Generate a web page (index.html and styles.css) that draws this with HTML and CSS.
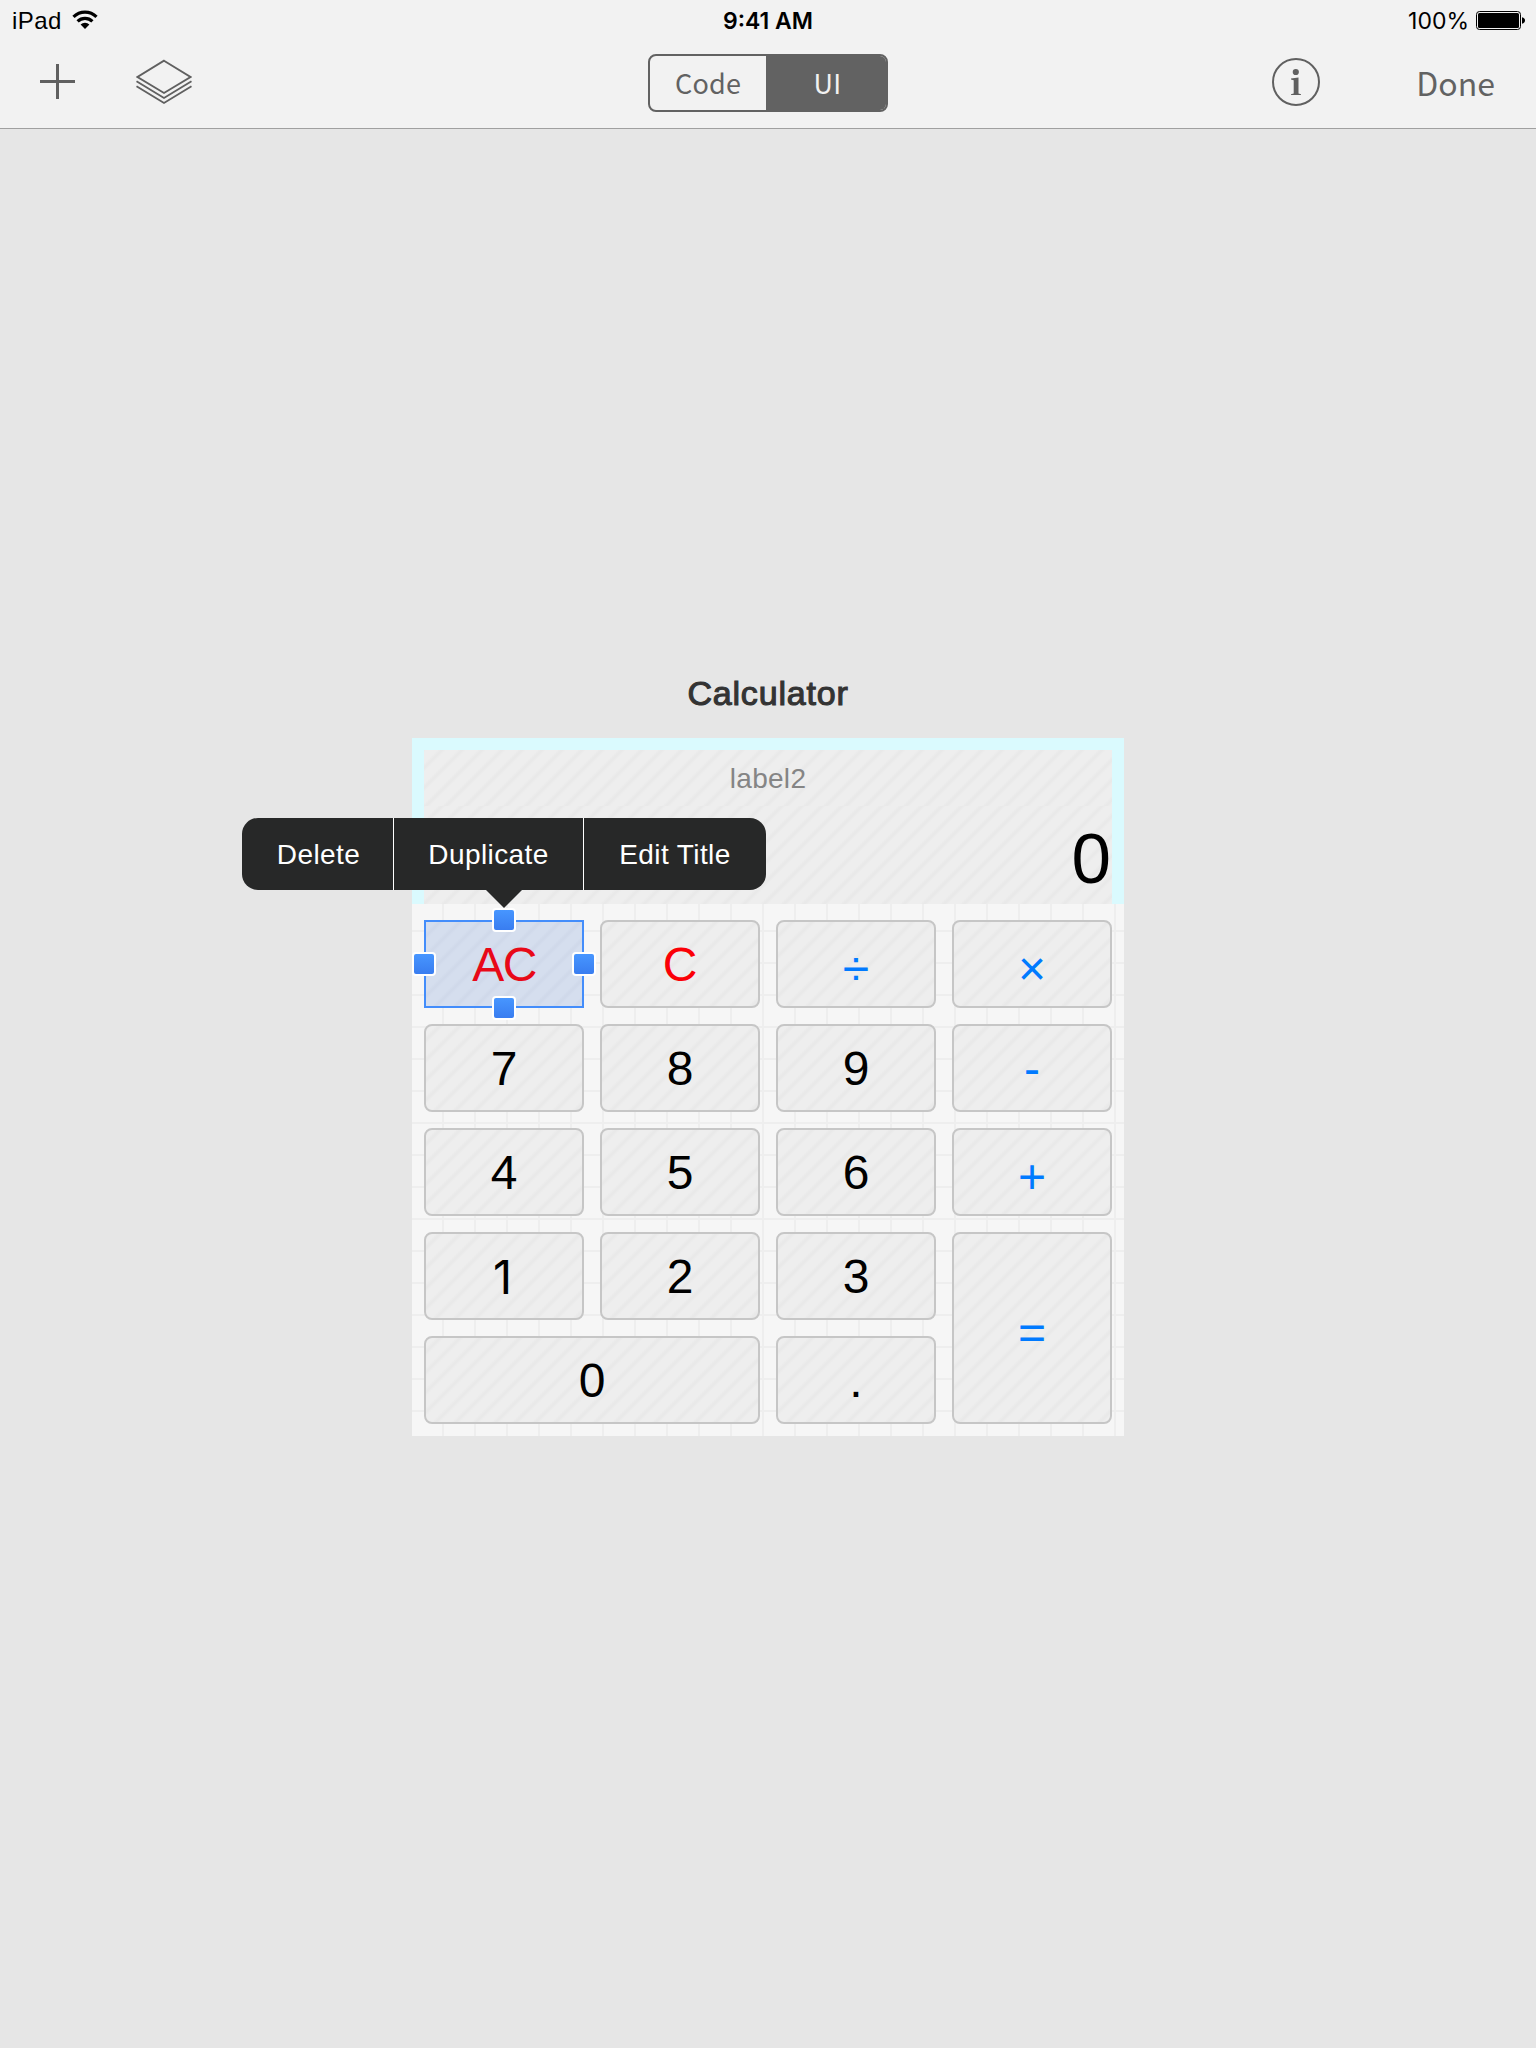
FILE: index.html
```html
<!DOCTYPE html>
<html lang="en">
<head>
<meta charset="utf-8">
<title>Calculator</title>
<link rel="stylesheet" href="styles.css">
</head>
<body>
<header class="header">
  <div class="status">
    <div class="status-left">
      <span class="device">iPad</span>
      <svg class="wifi" width="26" height="20" viewBox="0 0 26 20" fill="none" stroke="#000" stroke-width="3.2">
        <path d="M1.5 6.8A16.4 16.4 0 0 1 24.500 6.800"/>
        <path d="M5.600 11.300A10.600 10.600 0 0 1 20.400 11.300"/>
        <path d="M13 19L8.600 14.600A6.300 6.300 0 0 1 17.400 14.600Z" fill="#000" stroke="none"/>
      </svg>
    </div>
    <div class="time">9:41 AM</div>
    <div class="status-right">
      <span class="percent">100%</span>
      <svg width="50" height="20" viewBox="0 0 50 20">
        <rect x=".5" y=".5" width="44" height="18" rx="3" fill="none" stroke="#000"/>
        <rect x="2" y="2" width="41" height="15" rx="1.500"/>
        <path d="M46 6.300q3 .8 3 3.200t-3 3.200z"/>
      </svg>
    </div>
  </div>
  <nav class="toolbar">
    <div class="tools">
      <svg width="35" height="35" viewBox="0 0 35 35" fill="#606060"><path d="M16 0h3v16h16v3H19v16h-3V19H0v-3h16z"/></svg>
      <svg width="56" height="46" viewBox="0 0 56 46" fill="none" stroke="#606060" stroke-width="1.900">
        <path d="M28 1.700L54.500 18 28 34 1.500 18z"/>
        <path d="M.5 22.200L28 39 55.500 22.200M.5 27.200L28 44 55.500 27.200"/>
      </svg>
    </div>
    <div class="segments">
      <div class="segment">Code</div>
      <div class="segment segment-active">UI</div>
    </div>
    <div class="actions">
      <svg width="48" height="48" viewBox="0 0 48 48" fill="#606060">
        <circle cx="24" cy="24" r="23" fill="none" stroke="#606060" stroke-width="2"/>
        <circle cx="23.800" cy="14" r="3.100"/>
        <path d="M19 20.500l7.500-1v16l2.500.7V37H19v-.8l2.700-.7V22.300l-2.700-.7z"/>
      </svg>
      <span class="done">Done</span>
    </div>
  </nav>
</header>
<main class="workspace">
  <h1 class="title">Calculator</h1>
  <section class="panel">
    <div class="display">
      <div class="label-small stripes">label2</div>
      <div class="label-large stripes">0</div>
    </div>
    <div class="keys">
      <div class="key stripes selected">AC
        <i class="handle top"></i><i class="handle left"></i><i class="handle right"></i><i class="handle bottom"></i>
      </div>
      <div class="key stripes clear">C</div>
      <div class="key stripes operator">÷</div>
      <div class="key stripes operator">×</div>
      <div class="key stripes">7</div>
      <div class="key stripes">8</div>
      <div class="key stripes">9</div>
      <div class="key stripes operator minus">-</div>
      <div class="key stripes">4</div>
      <div class="key stripes">5</div>
      <div class="key stripes">6</div>
      <div class="key stripes operator">+</div>
      <div class="key stripes one">1</div>
      <div class="key stripes">2</div>
      <div class="key stripes">3</div>
      <div class="key stripes operator tall">=</div>
      <div class="key stripes wide">0</div>
      <div class="key stripes">.</div>
    </div>
    <div class="menu">
      <div class="menu-item">Delete</div>
      <div class="menu-item">Duplicate</div>
      <div class="menu-item">Edit Title</div>
    </div>
  </section>
</main>
</body>
</html>
```
FILE: styles.css
```css
* { box-sizing: border-box; }
body {
  margin: 0;
  min-height: 2048px;
  background: #e6e6e6;
  font-family: "Liberation Sans", Arial, sans-serif;
  color: #000;
}
.header {
  height: 129px;
  background: #f2f2f2;
  border-bottom: 1px solid #a0a0a0;
}
.status {
  display: grid;
  grid-template-columns: 1fr auto 1fr;
  align-items: center;
  height: 42px;
  padding: 0 10px 0 12px;
  font-size: 24px;
  line-height: 42px;
}
.status-left { display: flex; align-items: center; gap: 10px; }
.status-right { display: flex; align-items: center; justify-content: flex-end; gap: 7px; }
.device { letter-spacing: .4px; }
.wifi { margin-top: -2px; }
.time {
  margin-left: -2px;
  font-family: Inter, sans-serif;
  font-size: 23px;
  font-weight: 600;
}
.percent { font-family: Inter, sans-serif; font-size: 23px; }
.toolbar {
  display: grid;
  grid-template-columns: 1fr 240px 1fr;
  height: 86px;
  padding: 0 42px 0 40px;
  font-family: "Noto Sans CJK SC", "Noto Sans CJK JP", sans-serif;
  color: #626262;
}
.tools { display: flex; align-items: flex-start; gap: 61px; padding-top: 22px; }
.tools svg:last-child { margin-top: -5px; }
.segments {
  display: flex;
  height: 58px;
  margin-top: 12px;
  margin-left: 1px;
  margin-right: -1px;
  border: 2px solid #626262;
  border-radius: 8px;
  overflow: hidden;
  font-size: 27px;
  letter-spacing: .2px;
}
.segment { width: 117px; line-height: 54px; text-align: center; }
.segment-active { width: 121px; padding-left: 3px; background: #626262; color: #f1f1f1; }
.actions { display: flex; justify-content: flex-end; align-items: flex-start; gap: 96px; padding-top: 16px; }
.done { font-size: 32px; line-height: 48px; margin-right: -1px; }
.workspace { display: flex; flex-direction: column; align-items: center; }
.title {
  margin: 544px 0 0;
  height: 65px;
  font-size: 34px;
  line-height: 40px;
  font-weight: 400;
  letter-spacing: .8px;
  color: #333;
  -webkit-text-stroke: 1.100px #333;
}
.panel {
  position: relative;
  width: 712px;
  height: 698px;
  background-color: #f6f6f6;
  background-image:
    linear-gradient(90deg, transparent 30px, #eee 30px),
    linear-gradient(#eee 2px, transparent 2px);
  background-size: 32px 32px;
}
.stripes {
  background-color: #eee;
  background-image: repeating-linear-gradient(135deg, #ebebeb 0, #eee 1.800px, #eee 9.500px, #e9e9e9 12px, #e9e9e9 13.300px, #ebebeb 14.142px);
  background-origin: border-box;
}
.display {
  padding: 12px 12px 0;
  background: #dafafe;
}
.label-small {
  height: 56px;
  line-height: 58px;
  text-align: center;
  font-size: 28px;
  letter-spacing: .3px;
  color: #858585;
}
.label-large {
  height: 98px;
  line-height: 106px;
  padding-right: 1px;
  text-align: right;
  font-size: 71px;
}
.keys {
  display: grid;
  grid-template-columns: repeat(4, 160px);
  grid-auto-rows: 88px;
  gap: 16px;
  padding: 16px 12px 12px;
}
.key {
  display: flex;
  align-items: center;
  justify-content: center;
  border: 2px solid #c6c6c6;
  border-radius: 8px;
  padding-top: 1px;
  font-size: 48px;
}
.one { padding-top: 0; padding-right: 3px; font-family: Inter, sans-serif; font-size: 47px; }
.clear { color: #fb0007; }
.operator { padding-top: 8px; color: #007aff; }
.minus { padding-top: 1px; }
.tall { grid-column: 4; grid-row: 4 / 6; }
.wide { grid-column: 1 / 3; }
.selected {
  position: relative;
  border-color: #438dfb;
  border-radius: 0;
  letter-spacing: -1.500px;
  color: #e80918;
  background-color: #d5deee;
  background-image: repeating-linear-gradient(135deg, #d2dbec 0, #d5deee 1.800px, #d5deee 9.500px, #d0d9ea 12px, #d0d9ea 13.300px, #d2dbec 14.142px);
}
.handle {
  position: absolute;
  width: 24px;
  height: 24px;
  border: 2px solid #fff;
  border-radius: 4px;
  background: linear-gradient(#4796ff, #397df0);
  transform: translate(-50%, -50%);
}
.top { left: 50%; top: -2px; }
.bottom { left: 50%; top: calc(100% + 2px); }
.left { left: -2px; top: 50%; }
.right { left: calc(100% + 2px); top: 50%; }
.menu {
  position: absolute;
  left: -170px;
  top: 80px;
  display: flex;
  width: 524px;
  height: 72px;
  border-radius: 16px;
  background: #272828;
  color: #fff;
  font-size: 28px;
  letter-spacing: .4px;
  line-height: 74px;
  text-align: center;
}
.menu::after {
  content: "";
  position: absolute;
  left: 243px;
  top: 71px;
  border: 19px solid transparent;
  border-bottom-width: 0;
  border-top-color: #272828;
}
.menu-item { flex: none; width: 151px; padding-left: 2px; }
.menu-item + .menu-item { width: 190px; padding-left: 0; border-left: 1px solid #fff; }
.menu-item:last-child { width: 183px !important; }
```
